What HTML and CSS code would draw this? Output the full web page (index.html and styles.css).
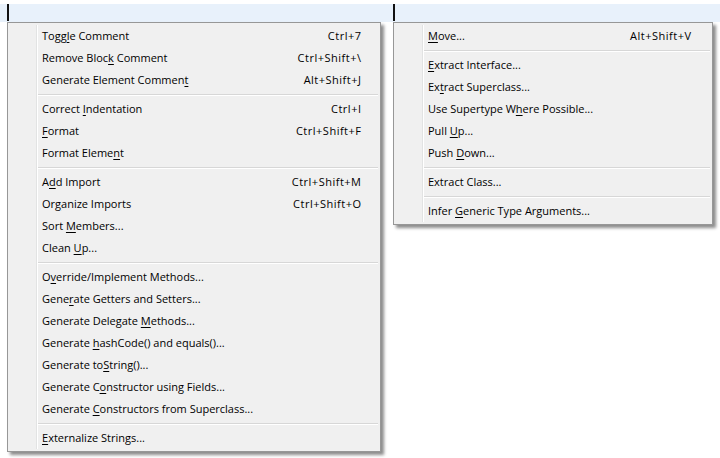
FILE: index.html
```html
<!DOCTYPE html>
<html>
<head>
<meta charset="utf-8">
<link rel="stylesheet" href="styles.css">
</head>
<body>
<div class="band">
  <span class="caret caret-left"></span>
  <span class="caret caret-right"></span>
</div>
<div class="menus">
  <div class="menu menu-left">
    <div class="item"><span class="label">Togg<u>l</u>e Comment</span><span class="key">Ctrl+7</span></div>
    <div class="item"><span class="label">Remove Bloc<u>k</u> Comment</span><span class="key">Ctrl+Shift+\</span></div>
    <div class="item"><span class="label">Generate Element Commen<u>t</u></span><span class="key">Alt+Shift+J</span></div>
    <div class="sep"></div>
    <div class="item"><span class="label">Correct <u>I</u>ndentation</span><span class="key">Ctrl+I</span></div>
    <div class="item"><span class="label"><u>F</u>ormat</span><span class="key">Ctrl+Shift+F</span></div>
    <div class="item"><span class="label">Format Eleme<u>n</u>t</span><span class="key"></span></div>
    <div class="sep"></div>
    <div class="item"><span class="label">A<u>d</u>d Import</span><span class="key">Ctrl+Shift+M</span></div>
    <div class="item"><span class="label">Or<u>g</u>anize Imports</span><span class="key">Ctrl+Shift+O</span></div>
    <div class="item"><span class="label">Sort <u>M</u>embers...</span><span class="key"></span></div>
    <div class="item"><span class="label">Clean <u>U</u>p...</span><span class="key"></span></div>
    <div class="sep"></div>
    <div class="item"><span class="label">O<u>v</u>erride/Implement Methods...</span><span class="key"></span></div>
    <div class="item"><span class="label">Gene<u>r</u>ate Getters and Setters...</span><span class="key"></span></div>
    <div class="item"><span class="label">Generate Delegate <u>M</u>ethods...</span><span class="key"></span></div>
    <div class="item"><span class="label">Generate <u>h</u>ashCode() and equals()...</span><span class="key"></span></div>
    <div class="item"><span class="label">Generate to<u>S</u>tring()...</span><span class="key"></span></div>
    <div class="item"><span class="label">Generate C<u>o</u>nstructor using Fields...</span><span class="key"></span></div>
    <div class="item"><span class="label">Generate <u>C</u>onstructors from Superclass...</span><span class="key"></span></div>
    <div class="sep"></div>
    <div class="item"><span class="label"><u>E</u>xternalize Strings...</span><span class="key"></span></div>
  </div>
  <div class="menu menu-right">
    <div class="item"><span class="label"><u>M</u>ove...</span><span class="key">Alt+Shift+V</span></div>
    <div class="sep"></div>
    <div class="item"><span class="label"><u>E</u>xtract Interface...</span><span class="key"></span></div>
    <div class="item"><span class="label">Ex<u>t</u>ract Superclass...</span><span class="key"></span></div>
    <div class="item"><span class="label">Use Supertype W<u>h</u>ere Possible...</span><span class="key"></span></div>
    <div class="item"><span class="label">Pull <u>U</u>p...</span><span class="key"></span></div>
    <div class="item"><span class="label">Push <u>D</u>own...</span><span class="key"></span></div>
    <div class="sep"></div>
    <div class="item"><span class="label">Extract Class...</span><span class="key"></span></div>
    <div class="sep"></div>
    <div class="item"><span class="label">Infer <u>G</u>eneric Type Arguments...</span><span class="key"></span></div>
  </div>
</div>
</body>
</html>
```

FILE: styles.css
```css
* { box-sizing: border-box; }
html, body { margin: 0; padding: 0; background: #ffffff; }
body {
  width: 720px;
  height: 458px;
  overflow: hidden;
  font-family: "Open Sans", "Noto Sans", sans-serif;
  font-size: 11px;
  color: #000;
}
.band {
  margin-top: 4px;
  height: 18px;
  background: #e8f1fb;
  display: flex;
  padding-left: 7px;
}
.caret {
  width: 2px;
  height: 17px;
  background: #111;
}
.caret-right { margin-left: 384px; }
.menus {
  display: flex;
  align-items: flex-start;
  gap: 12px;
  padding-left: 7px;
}
.menu {
  border: 1px solid #979797;
  background-color: #f0f0f0;
  background-image: linear-gradient(to right, transparent 28px, #e2e3e3 28px, #e2e3e3 29px, #ffffff 29px, #ffffff 30px, transparent 30px);
  background-size: 100% calc(100% - 4px);
  background-position: 0 2px;
  background-repeat: no-repeat;
  padding: 2px 0;
  box-shadow: 3px 3px 3px rgba(0, 0, 0, 0.45);
}
.menu-left { width: 374px; }
.menu-right { width: 320px; }
.item {
  height: 22px;
  display: flex;
  align-items: center;
  justify-content: space-between;
  padding-left: 34px;
  padding-right: 19px;
  padding-bottom: 2px;
  white-space: nowrap;
}
.menu-right .item { padding-right: 21px; }
.key { letter-spacing: 0.5px; margin-right: -0.5px; }
.item u { text-underline-offset: 2px; }
.sep {
  height: 7px;
  margin-left: 30px;
  margin-right: 2px;
  display: flex;
  align-items: center;
}
.sep::before {
  content: "";
  display: block;
  width: 100%;
  height: 1px;
  background: #d7d7d7;
  box-shadow: 0 1px 0 #ffffff;
}
```
